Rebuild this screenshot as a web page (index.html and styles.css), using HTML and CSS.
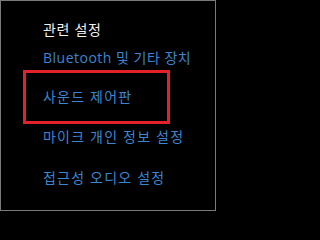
FILE: index.html
```html
<!DOCTYPE html>
<html lang="ko">
<head>
<meta charset="utf-8">
<link rel="stylesheet" href="styles.css">
</head>
<body>
<div class="frame">
  <div class="heading">관련 설정</div>
  <a class="link first">Bluetooth 및 기타 장치</a>
  <a class="link boxed">사운드 제어판</a>
  <a class="link mic">마이크 개인 정보 설정</a>
  <a class="link access">접근성 오디오 설정</a>
</div>
</body>
</html>
```
FILE: styles.css
```css
html, body {
  margin: 0;
  padding: 0;
  background: #000;
}
.frame {
  box-sizing: border-box;
  width: 216px;
  height: 211px;
  border: 1px solid #7a7a7a;
  background: #000;
  padding: 19px 0 0 42px;
  display: flex;
  flex-direction: column;
  align-items: flex-start;
  font-family: "Open Sans", "Noto Sans CJK KR", sans-serif;
  font-size: 14px;
  line-height: 20px;
}
.heading {
  color: #f2f2f2;
  font-size: 14px;
  letter-spacing: 0.7px;
}
.link {
  color: #3b86d1;
  display: block;
  white-space: nowrap;
  letter-spacing: 1.2px;
}
.first {
  margin-top: 8px;
  letter-spacing: 0.5px;
}
.boxed {
  margin-top: 2px;
  margin-left: -20px;
  width: 124px;
  border: 3px solid #e3212b;
  padding: 14px 0 14px 17px;
}
.mic {
  margin-top: 3px;
}
.access {
  margin-top: 21px;
}
```
